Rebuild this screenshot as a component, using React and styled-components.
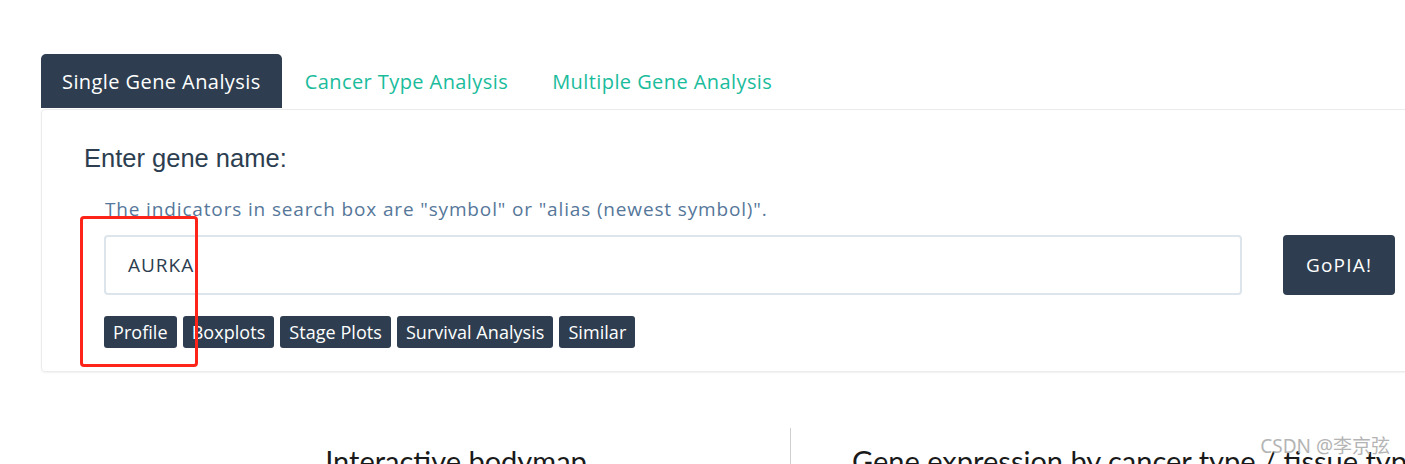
import React from "react";
import styled, { createGlobalStyle } from "styled-components";

const GlobalStyle = createGlobalStyle`
  body {
    margin: 0;
    background: #ffffff;
    overflow: hidden;
    font-family: "Open Sans", "Noto Sans", sans-serif;
  }
`;

const tabs = ["Single Gene Analysis", "Cancer Type Analysis", "Multiple Gene Analysis"];
const tools = ["Profile", "Boxplots", "Stage Plots", "Survival Analysis", "Similar"];

const App = () => {
  return (
    <Page>
      <GlobalStyle />
      <Wrap>
        <TabBar>
          {tabs.map((t, i) => (
            <Tab key={t} active={i === 0}>
              {t}
            </Tab>
          ))}
        </TabBar>
        <Panel>
          <Label>Enter gene name:</Label>
          <Form>
            <Hint>The indicators in search box are "symbol" or "alias (newest symbol)".</Hint>
            <SearchRow>
              <InputBox>AURKA</InputBox>
              <GoButton>GoPIA!</GoButton>
            </SearchRow>
            <ToolRow>
              {tools.map((t) => (
                <ToolButton key={t}>{t}</ToolButton>
              ))}
            </ToolRow>
          </Form>
          <Marker />
        </Panel>
      </Wrap>
      <Columns>
        <LeftCol>
          <Heading>Interactive bodymap</Heading>
        </LeftCol>
        <RightCol>
          <Heading>Gene expression by cancer type / tissue type</Heading>
        </RightCol>
      </Columns>
      <Watermark>CSDN @李京弦</Watermark>
    </Page>
  );
};

export default App;

const Page = styled.div`
  position: relative;
  width: 1405px;
  height: 464px;
  overflow: hidden;
  padding-top: 54px;
  box-sizing: border-box;
`;

const Wrap = styled.div`
  margin-left: 41px;
  width: 1420px;
`;

const TabBar = styled.div`
  display: flex;
  height: 55px;
`;

const Tab = styled.div`
  height: 54px;
  padding: 0 21px 0 ${(p) => (p.active ? "21px" : "23px")};
  display: flex;
  align-items: center;
  font-size: 20px;
  letter-spacing: 0.42px;
  border-radius: 5px 5px 0 0;
  background: ${(p) => (p.active ? "#2e3e50" : "transparent")};
  color: ${(p) => (p.active ? "#ffffff" : "#1abc9c")};
`;

const Panel = styled.div`
  position: relative;
  border: 1px solid #ebebeb;
  border-radius: 4px;
  box-shadow: 0 1px 2px rgba(0, 0, 0, 0.06);
  padding: 33px 0 0 42px;
  height: 263px;
  box-sizing: border-box;
`;

const Label = styled.div`
  font-family: "Liberation Sans", Arial, sans-serif;
  font-size: 25.5px;
  line-height: 30px;
  color: #2c3e50;
`;

const Form = styled.div`
  padding-left: 20px;
  padding-top: 24px;
  width: 1291px;
`;

const Hint = styled.div`
  font-size: 19px;
  letter-spacing: 0.85px;
  line-height: 24px;
  color: #56779a;
  padding-left: 1px;
`;

const SearchRow = styled.div`
  display: flex;
  align-items: center;
  gap: 41px;
  margin-top: 14px;
`;

const InputBox = styled.div`
  flex: 1;
  height: 60px;
  box-sizing: border-box;
  border: 2px solid #dce4ec;
  border-radius: 4px;
  display: flex;
  align-items: center;
  padding-left: 22px;
  font-size: 19px;
  letter-spacing: 1px;
  color: #2c3e50;
`;

const GoButton = styled.div`
  width: 112px;
  height: 60px;
  border-radius: 4px;
  background: #2e3e50;
  color: #ffffff;
  font-size: 19px;
  letter-spacing: 1.2px;
  display: flex;
  align-items: center;
  justify-content: center;
`;

const ToolRow = styled.div`
  display: flex;
  gap: 6px;
  margin-top: 21px;
`;

const ToolButton = styled.div`
  height: 32px;
  padding: 0 9px;
  border-radius: 3px;
  background: #2e3e50;
  color: #ffffff;
  font-size: 18px;
  letter-spacing: 0.05px;
  display: flex;
  align-items: center;
`;

const Marker = styled.div`
  position: absolute;
  left: 38px;
  top: 106px;
  width: 118px;
  height: 151px;
  box-sizing: border-box;
  border: 3px solid #ff2419;
  border-radius: 4px;
`;

const Columns = styled.div`
  display: flex;
  margin-top: 56px;
  padding-left: 122px;
`;

const LeftCol = styled.div`
  flex: 0 0 668px;
  text-align: center;
  border-right: 1px solid #cfcfcf;
  padding-top: 16px;
  height: 60px;
`;

const RightCol = styled.div`
  padding-left: 61px;
  padding-top: 16px;
  white-space: nowrap;
`;

const Heading = styled.div`
  font-family: "Lato", "Noto Sans", sans-serif;
  font-size: 29px;
  line-height: 34px;
  color: #1a1a1a;
`;

const Watermark = styled.div`
  position: absolute;
  right: 15px;
  top: 431px;
  font-family: "Noto Sans", "Noto Sans CJK SC", sans-serif;
  font-size: 19px;
  color: #b4b4b4;
`;
